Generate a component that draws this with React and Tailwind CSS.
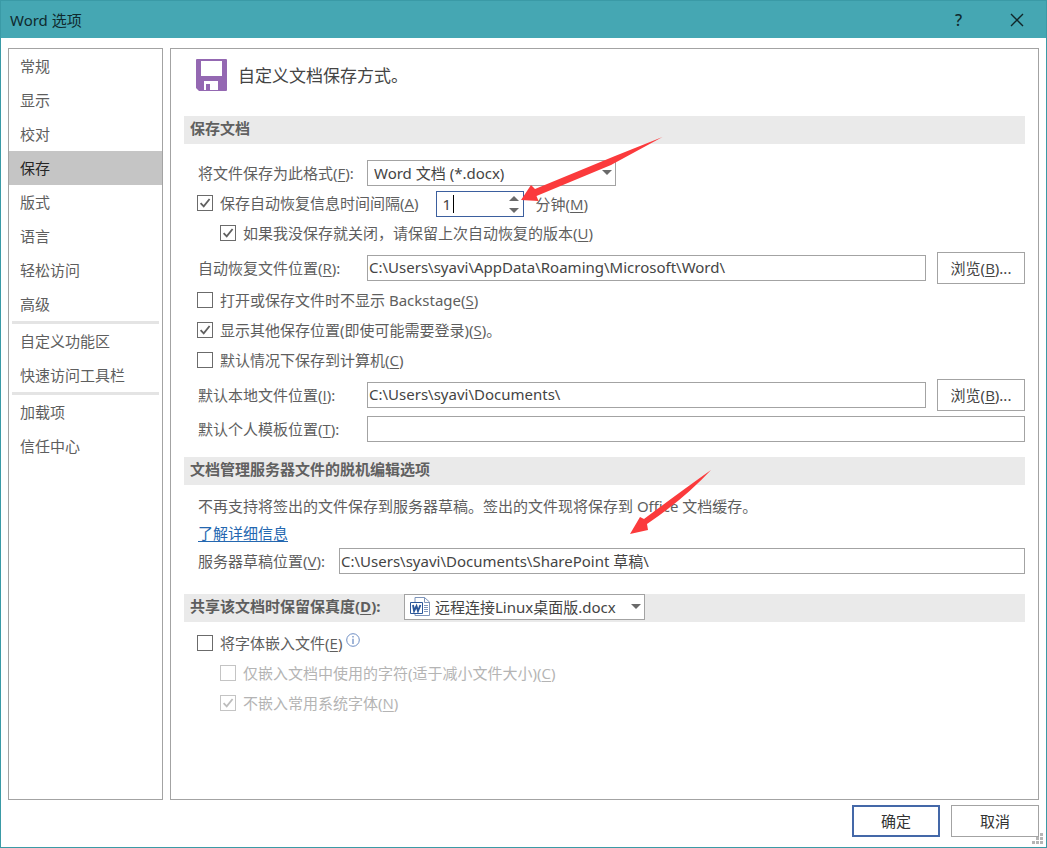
import React, { useState } from "react";

const NAV_GROUPS = [
  ["常规", "显示", "校对", "保存", "版式", "语言", "轻松访问", "高级"],
  ["自定义功能区", "快速访问工具栏"],
  ["加载项", "信任中心"],
];

function Key({ k }) {
  return (
    <>
      (<span className="font-['Open_Sans',sans-serif] underline underline-offset-2">{k}</span>)
    </>
  );
}

function Sidebar() {
  const [active, setActive] = useState("保存");
  return (
    <nav className="w-[155px] shrink-0 border border-[#a3a3a3] bg-white">
      {NAV_GROUPS.map((group, i) => (
        <div key={i}>
          {i > 0 && <div className="mx-[3px] h-[3px] bg-[#e4e4e4]" />}
          {group.map((item) => (
            <button
              key={item}
              type="button"
              onClick={() => setActive(item)}
              className={
                item === active
                  ? "block h-[34px] w-full bg-[#c5c5c5] pl-[11px] text-left text-[#262626]"
                  : "block h-[34px] w-full pl-[11px] text-left"
              }
            >
              {item}
            </button>
          ))}
        </div>
      ))}
    </nav>
  );
}

function Section({ children }) {
  return (
    <h2 className="flex h-7 items-center bg-[#eaeaea] px-1.5 pb-1 font-bold text-[#606060]">{children}</h2>
  );
}

function Check({ id, checked, disabled, indent, children }) {
  return (
    <div className={indent ? "flex h-[30px] items-center pl-9" : "flex h-[30px] items-center pl-[13px]"}>
      <span className="relative flex size-4 shrink-0">
        <input
          id={id}
          type="checkbox"
          defaultChecked={checked}
          disabled={disabled}
          className="peer size-4 appearance-none border border-[#6b6b6b] bg-white disabled:border-[#c4c4c4]"
        />
        <svg
          viewBox="0 0 16 16"
          className="pointer-events-none absolute inset-0 hidden size-4 fill-none stroke-[#606060] peer-checked:block peer-disabled:stroke-[#bdbdbd]"
          strokeWidth="1.8"
        >
          <path d="M3.6 8.2 6.7 11.4 12.6 4" />
        </svg>
      </span>
      <label htmlFor={id} className={disabled ? "pl-[7px] text-[#b4b4b4]" : "pl-[7px]"}>
        {children}
      </label>
    </div>
  );
}

function TextField({ id, value }) {
  return (
    <input
      id={id}
      type="text"
      defaultValue={value}
      className="h-[26px] min-w-0 flex-1 border border-[#a3a3a3] bg-white px-px pb-0.5 text-[#444] outline-none"
    />
  );
}

function Label({ id, children }) {
  return (
    <label htmlFor={id} className="w-[169px] shrink-0">
      {children}
    </label>
  );
}

function Browse() {
  return (
    <button type="button" className="ml-[11px] h-8 w-22 shrink-0 border border-[#a3a3a3] bg-white text-[#444]">
      浏览
      <Key k="B" />
      ...
    </button>
  );
}

function Caret({ className }) {
  return (
    <svg viewBox="0 0 10 5" className={className}>
      <path d="M0 0H10L5 5Z" fill="#6a6a6a" />
    </svg>
  );
}

function WordFile() {
  return (
    <svg viewBox="0 0 20 20" className="pointer-events-none absolute left-1.5 top-[3px] size-5">
      <path d="M5 .5H14.5L19.5 5V18.5H5Z" fill="#fff" stroke="#7d94ba" />
      <path d="M14.5 .5V5.5H19.5" fill="none" stroke="#7d94ba" />
      <path d="M14 8.5H18M14 10.5H18M14 12.5H18M14 14.5H18" stroke="#7d94ba" />
      <path d="M.5 5.5H12.5V16.5H.5Z" fill="#fff" stroke="#2b579a" />
      <path d="M3 8 4.1 14 6.5 9 8 14 10.4 8" fill="none" stroke="#2b579a" strokeWidth="1.9" />
    </svg>
  );
}

function SaveIcon() {
  return (
    <svg viewBox="0 0 32 32" className="size-8">
      <path d="M1 0H30Q31 0 31 1V31Q31 32 30 32H3L0 29V1Q0 0 1 0Z" fill="#9468b2" />
      <path d="M5 2H26V17H5Z" fill="#fff" />
      <path d="M8 22H22V31H14V25H10V31H8Z" fill="#fff" />
    </svg>
  );
}

export default function App() {
  return (
    <div className="flex min-h-screen flex-col border border-[#3a9aa6] bg-white font-['Noto_Sans','Noto_Sans_CJK_SC',sans-serif] text-[15px] leading-5 text-[#5e5e5e]">
      <header className="flex h-[37px] items-center bg-[#45a7b3] pl-[9px] text-[#0f2a2e]">
        <h1 className="flex-1">Word 选项</h1>
        <button type="button" aria-label="帮助" className="h-9 w-[57px] text-base font-medium">
          ?
        </button>
        <button type="button" aria-label="关闭" className="flex h-9 w-[59px] items-center justify-center">
          <svg viewBox="0 0 14 14" className="size-3.5" fill="none" stroke="#102629" strokeWidth="1.4">
            <path d="M1 1 13 13M13 1 1 13" />
          </svg>
        </button>
      </header>

      <div className="flex flex-1 gap-[7px] px-[7px] pt-2.5">
        <Sidebar />
        <main className="min-w-0 flex-1 border border-[#a3a3a3] px-[13px]">
          <div className="flex h-[52px] items-center gap-2.5 pl-3 text-[17px] text-[#444]">
            <SaveIcon />
            <p className="pt-0.5">自定义文档保存方式。</p>
          </div>

          <div className="mt-[15px]">
            <Section>保存文档</Section>
          </div>

          <div className="mt-3.5 flex h-[30px] items-center pl-3.5">
            <Label id="format">
              将文件保存为此格式
              <Key k="F" />:
            </Label>
            <div className="relative flex">
              <select
                id="format"
                className="h-[26px] w-[249px] appearance-none border border-[#a3a3a3] bg-white pl-1.5 text-[#444] outline-none"
              >
                <option>Word 文档 (*.docx)</option>
                <option>Word 97-2003 文档 (*.doc)</option>
              </select>
              <Caret className="pointer-events-none absolute right-1 top-2.5 h-[5px] w-2.5" />
            </div>
          </div>

          <div className="flex items-center">
            <Check id="autosave" checked>
              保存自动恢复信息时间间隔
              <Key k="A" />
            </Check>
            <div className="relative ml-[17px] mt-0.5 flex h-[26px] w-[88px] border border-[#3b5f9e]">
              <input
                id="minutes"
                type="text"
                defaultValue="1"
                className="min-w-0 flex-1 bg-white pl-1.5 text-[#444] outline-none"
              />
              <span className="absolute left-4 top-[3px] h-[18px] w-px bg-black" />
              <div className="flex w-[18px] flex-col">
                <button type="button" aria-label="增加" className="flex flex-1 items-center justify-center">
                  <Caret className="h-[5px] w-2.5 rotate-180" />
                </button>
                <button type="button" aria-label="减少" className="flex flex-1 items-center justify-center">
                  <Caret className="h-[5px] w-2.5" />
                </button>
              </div>
              <svg
                viewBox="0 0 142 66"
                className="pointer-events-none absolute -top-14 left-[84px] z-10 h-[66px] w-[142px]"
              >
                <path d="M141.500 1 94 20 14 53 10 49 0 64 17.500 65 15.500 60 90 29Z" fill="#fb3a3c" />
              </svg>
            </div>
            <label htmlFor="minutes" className="pl-3 pt-0.5">
              分钟
              <Key k="M" />
            </label>
          </div>

          <Check id="keep" checked indent>
            如果我没保存就关闭，请保留上次自动恢复的版本
            <Key k="U" />
          </Check>

          <div className="mt-1 flex h-8 items-center pl-3.5">
            <Label id="recover">
              自动恢复文件位置
              <Key k="R" />:
            </Label>
            <TextField id="recover" value="C:\Users\syavi\AppData\Roaming\Microsoft\Word\" />
            <Browse />
          </div>

          <div className="mt-px">
            <Check id="backstage">
              打开或保存文件时不显示 Backstage
              <Key k="S" />
            </Check>
            <Check id="places" checked>
              显示其他保存位置(即使可能需要登录)
              <Key k="S" />。
            </Check>
            <Check id="computer">
              默认情况下保存到计算机
              <Key k="C" />
            </Check>
          </div>

          <div className="mt-1 flex h-8 items-center pl-3.5">
            <Label id="local">
              默认本地文件位置
              <Key k="I" />:
            </Label>
            <TextField id="local" value="C:\Users\syavi\Documents\" />
            <Browse />
          </div>
          <div className="mt-[3px] flex h-[30px] items-center pl-3.5">
            <Label id="template">
              默认个人模板位置
              <Key k="T" />:
            </Label>
            <TextField id="template" value="" />
          </div>

          <div className="mt-[13px]">
            <Section>文档管理服务器文件的脱机编辑选项</Section>
          </div>
          <div className="relative mt-1.5 flex h-[30px] items-center pl-3.5">
            <p>不再支持将签出的文件保存到服务器草稿。签出的文件现将保存到 Office 文档缓存。</p>
            <svg
              viewBox="0 0 82 66"
              className="pointer-events-none absolute -top-[21px] left-[446px] z-10 h-[66px] w-[82px]"
            >
              <path d="M81 0 Q50 22 14 49 L10 47 0 64 18 60 17 54 Q54 29 81 0Z" fill="#fb3a3c" />
            </svg>
          </div>
          <div className="flex h-6 items-center pl-3.5">
            <a href="#details" className="text-[#2467b0] underline underline-offset-2">
              了解详细信息
            </a>
          </div>
          <div className="mt-px flex h-[30px] items-center pl-3.5">
            <label htmlFor="drafts" className="w-[141px] shrink-0">
              服务器草稿位置
              <Key k="V" />:
            </label>
            <TextField id="drafts" value="C:\Users\syavi\Documents\SharePoint 草稿\" />
          </div>

          <div className="mt-[18px] flex h-7 items-start bg-[#eaeaea] pl-1.5">
            <label htmlFor="share" className="w-[214px] shrink-0 pt-0.5 font-bold">
              共享该文档时保留保真度
              <Key k="D" />:
            </label>
            <div className="relative flex">
              <select
                id="share"
                className="h-[26px] w-[241px] appearance-none border border-[#a3a3a3] bg-white pl-[30px] text-[#444] outline-none"
              >
                <option>远程连接Linux桌面版.docx</option>
                <option>所有新文档</option>
              </select>
              <WordFile />
              <Caret className="pointer-events-none absolute right-1 top-2.5 h-[5px] w-2.5" />
            </div>
          </div>

          <div className="mt-1.5">
            <div className="flex items-center">
              <Check id="embed">
                将字体嵌入文件
                <Key k="E" />
              </Check>
              <svg viewBox="0 0 14 14" className="mb-1.5 ml-1 size-3.5" fill="none" stroke="#6f8fc4">
                <circle cx="7" cy="7" r="6.300" />
                <path d="M7 5.800V11M7 3V4.500" strokeWidth="1.300" />
              </svg>
            </div>
            <Check id="used" disabled indent>
              仅嵌入文档中使用的字符(适于减小文件大小)
              <Key k="C" />
            </Check>
            <Check id="common" checked disabled indent>
              不嵌入常用系统字体
              <Key k="N" />
            </Check>
          </div>
        </main>
      </div>

      <footer className="relative flex h-[47px] justify-end gap-[11px] px-[7px] pt-[5px]">
        <button type="button" className="h-8 w-22 border-2 border-[#4468a8] bg-white text-[#333]">
          确定
        </button>
        <button type="button" className="h-8 w-22 border border-[#a3a3a3] bg-white text-[#333]">
          取消
        </button>
        <svg viewBox="0 0 12 12" className="absolute bottom-0.5 right-0.5 size-3" fill="#b5b5b5">
          <path d="M8 0h3v3H8zM4 4h3v3H4zM8 4h3v3H8zM0 8h3v3H0zM4 8h3v3H4zM8 8h3v3H8z" />
        </svg>
      </footer>
    </div>
  );
}
